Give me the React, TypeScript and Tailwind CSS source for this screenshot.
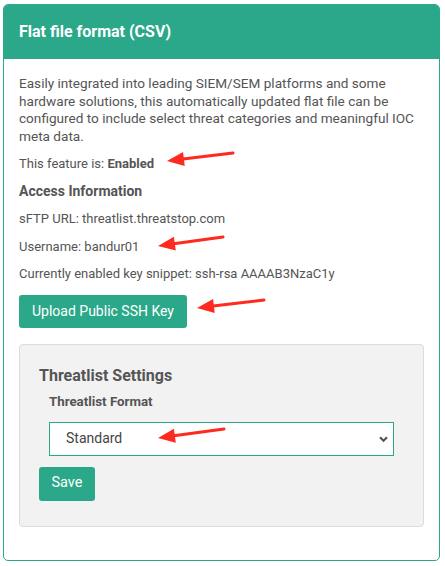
import React from "react";

function Arrow({ x1, y1, x2, y2 }: { x1: number; y1: number; x2: number; y2: number }) {
  const dx = x2 - x1;
  const dy = y2 - y1;
  const len = Math.sqrt(dx * dx + dy * dy);
  const ux = dx / len;
  const uy = dy / len;
  const hl = 17;
  const hw = 7;
  const bx = x2 - ux * hl;
  const by = y2 - uy * hl;
  const px = -uy;
  const py = ux;
  const pts = `${x2},${y2} ${bx + px * hw},${by + py * hw} ${bx - px * hw},${by - py * hw}`;
  return (
    <g>
      <line x1={x1} y1={y1} x2={bx + ux * 3} y2={by + uy * 3} stroke="#ff2a1f" strokeWidth={3} strokeLinecap="round" />
      <polygon points={pts} fill="#ff2a1f" />
    </g>
  );
}

export default function App() {
  return (
    <div className="relative w-[445px] h-[566px] bg-white" style={{ fontFamily: "Roboto, 'Liberation Sans', sans-serif" }}>
      <div className="ml-[3px] pt-[4px]">
        <div className="w-[437px] h-[557px] border border-[#2aa889] rounded-[5px] overflow-hidden flex flex-col">
          <div className="h-[54px] bg-[#2aa889] flex items-center px-[15px] shrink-0">
            <span className="text-white font-bold text-[16px] leading-none">Flat file format (CSV)</span>
          </div>
          <div className="flex-1 flex flex-col px-[15px] pt-[16px] text-[#555] text-[13.6px] leading-[17.5px]">
            <p>
              Easily integrated into leading SIEM/SEM platforms and some hardware solutions, this automatically updated flat file can be configured to include select threat categories and meaningful IOC meta data.
            </p>
            <p className="mt-[10px] text-[13px]">
              This feature is: <span className="font-bold">Enabled</span>
            </p>
            <p className="mt-[10px] font-bold text-[14px]">Access Information</p>
            <p className="mt-[10px] text-[13px]">sFTP URL: threatlist.threatstop.com</p>
            <p className="mt-[10px] text-[13px]">Username: bandur01</p>
            <p className="mt-[10px] text-[13px]">Currently enabled key snippet: ssh-rsa AAAAB3NzaC1y</p>
            <div className="mt-[12px]">
              <button className="h-[33px] px-[13px] bg-[#2aa889] text-white text-[14px] rounded-[3px] leading-none">
                Upload Public SSH Key
              </button>
            </div>
            <div className="mt-[16px] h-[183px] bg-[#f2f2f2] border border-[#dcdcdc] rounded-[4px] pl-[19px] pr-[29px] pt-[21px]">
              <div className="font-bold text-[16px] text-[#555] leading-[20px]">Threatlist Settings</div>
              <div className="pl-[10px] mt-[7px]">
                <div className="font-bold text-[13.3px] text-[#555] leading-[17px]">Threatlist Format</div>
                <div className="mt-[12px] h-[34px] bg-white border border-[#2aa889] flex items-center justify-between pl-[16px] pr-[4px]">
                  <span className="text-[14px] text-[#444]">Standard</span>
                  <svg width="11" height="8" viewBox="0 0 11 8">
                    <path d="M2 2.2 L5.5 5.7 L9 2.2" fill="none" stroke="#555" strokeWidth="2.2" />
                  </svg>
                </div>
              </div>
              <button className="mt-[11px] h-[34px] w-[56px] bg-[#2aa889] text-white text-[14.5px] rounded-[3px] leading-none">
                Save
              </button>
            </div>
          </div>
        </div>
      </div>
      <svg className="absolute left-0 top-0 pointer-events-none" width="445" height="566">
        <Arrow x1={233} y1={153} x2={167} y2={161} />
        <Arrow x1={223} y1={237} x2={158} y2={246} />
        <Arrow x1={264} y1={300} x2={197} y2={308} />
        <Arrow x1={224} y1={429} x2={158} y2={438} />
      </svg>
    </div>
  );
}
